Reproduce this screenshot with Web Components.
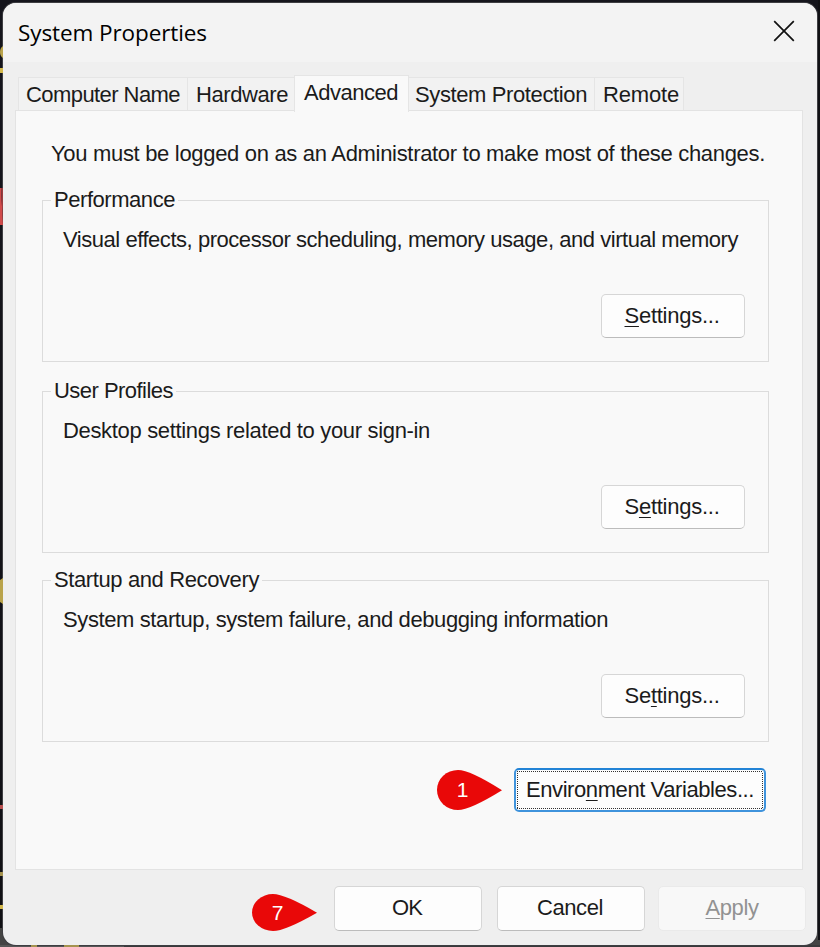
<!DOCTYPE html>
<html lang="en">
<head>
<meta charset="utf-8">
<title>System Properties</title>
<style>
html,body{margin:0;height:947px;overflow:hidden;background:#141418}
body{font:22px "Liberation Sans",Arial,sans-serif;color:#1b1b1b;position:relative}
</style>
</head>
<body>
<desk-edge></desk-edge>
<system-window></system-window>
<edge-marks></edge-marks>
<script>
const define = (name, html, setup) => customElements.define(name, class extends HTMLElement {
  connectedCallback() {
    if (this.shadowRoot) return;
    const t = document.createElement('template');
    t.innerHTML = typeof html === 'function' ? html(this) : html;
    this.attachShadow({mode: 'open'}).append(t.content.cloneNode(true));
    if (setup) setup(this);
  }
});

/* Slivers of the desktop visible around the dialog */
define('desk-edge', `<style>
:host{position:absolute;inset:0;display:block;background:linear-gradient(#15151c,#101014)}
svg{display:block}</style>
<svg width="820" height="947">
<rect x="0" y="928" width="820" height="19" fill="#444"/><rect x="818" y="0" width="2" height="940" fill="#101014"/>
<rect x="0" y="945" width="124" height="2" fill="#565656"/><rect x="124" y="945" width="696" height="2" fill="#39393b"/>
</svg>`);

define('edge-marks', `<style>:host{position:absolute;left:0;top:0;display:block}svg{display:block}</style>
<svg width="124" height="947">
<path d="M3 46Q0 48 0 52Q0 56 3 58Z" fill="#b9a34b"/><rect y="68" width="3" height="5" fill="#d3b84c"/>
<path d="M0 188H1L3 225H0Z" fill="#d04a4a"/><path d="M1 188H3V225Z" fill="#9b3d40"/>
<path d="M0 580L3 578V604L0 602Z" fill="#b9a34b"/>
<rect y="805" width="3" height="4" fill="#b85050"/><rect y="872" width="3" height="4" fill="#a5934f"/><rect y="905" width="3" height="4" fill="#d3b84c"/>
<rect x="31" y="945" width="6" height="2" fill="#a5934f"/><rect x="64" y="945" width="15" height="2" fill="#a5934f"/>
</svg>`);

/* Single line of text tracked to a set width */
define('fit-text', `<style>:host{display:block;white-space:nowrap;line-height:26px}span{display:inline-block}
::slotted(u){text-decoration-thickness:1px;text-underline-offset:3px}</style><span><slot></slot></span>`, el => {
  const s = el.shadowRoot.querySelector('span');
  el.style.width = el.getAttribute('w') + 'px';
  const w = +el.getAttribute('w');
  s.style.letterSpacing = (w - s.getBoundingClientRect().width) / Math.max(1, el.textContent.length) + 'px';
});

define('close-icon', `<style>:host{display:block;width:22px;height:22px}svg{display:block}</style>
<svg width="22" height="22" viewBox="0 0 22 22"><path d="M1.2 1.2L20.8 20.8M20.8 1.2L1.2 20.8" stroke="#111" stroke-width="1.7" fill="none"/></svg>`);

define('push-button', `<style>
:host{display:flex;box-sizing:border-box;width:144px;height:44px;padding-top:8px;justify-content:center;border:1.5px solid #d6d6d6;border-bottom-color:#bcbcbc;border-radius:5px;background:#fdfdfd}
:host([wide]){width:148px;height:45px}
:host([disabled]){background:#f8f8f8;border-color:#eaeaea;color:#929292}
:host([focused]){width:252px;height:44px;border:2px solid #3f93dc;border-top-color:#2283d6;padding:0;background:#fdfdfd}
div{display:contents}
:host([focused]) div{display:flex;box-sizing:border-box;width:248px;height:40px;padding-top:7px;justify-content:center;
background:repeating-linear-gradient(90deg,#333 0 1px,#fdfdfd 1px 2px) 1px 1px/246px 1px no-repeat,repeating-linear-gradient(90deg,#333 0 1px,#fdfdfd 1px 2px) 1px 38px/246px 1px no-repeat,repeating-linear-gradient(#333 0 1px,#fdfdfd 1px 2px) 1px 1px/1px 38px no-repeat,repeating-linear-gradient(#333 0 1px,#fdfdfd 1px 2px) 246px 1px/1px 38px no-repeat}
</style><div><slot></slot></div>`);

define('step-marker', el => `<style>
:host{display:grid;width:66px;color:#fff;font-size:21px}
svg{grid-area:1/1;display:block}span{grid-area:1/1;align-self:center;width:51px;text-align:center;line-height:24px}
</style><svg width="66" height="${el.getAttribute('h')}" viewBox="0 0 66 40" preserveAspectRatio="none"><path d="M65 20.2Q33 40 21 40A21 20 0 0 1 21 0Q33 0 65 20.2Z" fill="#e90808"/></svg><span><slot></slot></span>`);

define('tab-label', `<style>
:host{display:block;box-sizing:border-box;height:33px;padding:4px 0 0 7px;border:1px solid #e5e5e5;border-left-width:0;border-bottom:0;background:#f2f2f2}
:host([first]){border-left-width:1px}
:host([active]){height:37px;margin-bottom:-2px;background:#f9f9f9;border-left-width:1px;margin-left:-1px;padding-left:9px}
</style><slot></slot>`);

define('group-box', `<style>
:host{display:block;box-sizing:border-box;width:727px;height:162px;border:1px solid #dcdcdc;margin-left:26px}
header{width:max-content;margin:-14px 0 0 8px;padding:0 3px;background:#f9f9f9}
section{padding:14px 0 0 20px}
footer{display:flex;justify-content:flex-end;margin-top:41px;padding-right:23px}
</style><header><slot name="title"></slot></header><section><slot></slot></section><footer><slot name="action"></slot></footer>`);

define('system-window', `<style>
:host{display:flex;flex-direction:column;position:relative;width:814px;height:942px;margin:3px;overflow:hidden;border-radius:13px;background:#efefef;box-shadow:0 0 0 1px #3e3e42;outline:0}
.bar{display:flex;justify-content:space-between;height:59px;background:#f3f3f3;padding:0 22px 0 15px;box-sizing:border-box}
.bar fit-text{font-family:"Open Sans","Noto Sans",sans-serif;color:#000;font-size:22.5px;padding-top:17px}
close-icon{margin-top:17px}
nav{display:flex;align-items:flex-end;height:48px;padding-left:15px;position:relative;z-index:1}
main{display:block;box-sizing:border-box;width:788px;height:760px;margin-left:12px;border:1px solid #e3e3e3;background:#f9f9f9}
.note{padding:30px 0 0 35px;height:89px;box-sizing:border-box}
.env{display:flex;justify-content:flex-end;align-items:center;gap:11px;padding-right:36px;margin-top:26px}
.actions{display:flex;align-items:center;justify-content:flex-end;padding:16px 11px 0 0}
</style>
<div class="bar"><fit-text w="189">System Properties</fit-text><close-icon></close-icon></div>
<nav>
<tab-label first style="width:170px"><fit-text w="154">Computer Name</fit-text></tab-label>
<tab-label style="width:107px;padding-left:8px"><fit-text w="92">Hardware</fit-text></tab-label>
<tab-label active style="width:115px"><fit-text w="94">Advanced</fit-text></tab-label>
<tab-label style="width:186px;padding-left:6px"><fit-text w="172">System Protection</fit-text></tab-label>
<tab-label style="width:89px;padding-left:8px"><fit-text w="76">Remote</fit-text></tab-label>
</nav>
<main>
<div class="note"><fit-text w="714">You must be logged on as an Administrator to make most of these changes.</fit-text></div>
<group-box><fit-text slot="title" w="121">Performance</fit-text><fit-text w="675">Visual effects, processor scheduling, memory usage, and virtual memory</fit-text><push-button slot="action"><fit-text w="95" style="margin-right:2px"><u>S</u>ettings...</fit-text></push-button></group-box>
<group-box style="margin-top:29px"><fit-text slot="title" w="119">User Profiles</fit-text><fit-text w="367">Desktop settings related to your sign-in</fit-text><push-button slot="action"><fit-text w="95" style="margin-right:2px">S<u>e</u>ttings...</fit-text></push-button></group-box>
<group-box style="margin-top:27px"><fit-text slot="title" w="205">Startup and Recovery</fit-text><fit-text w="545">System startup, system failure, and debugging information</fit-text><push-button slot="action"><fit-text w="95" style="margin-right:2px">Se<u>t</u>tings...</fit-text></push-button></group-box>
<div class="env"><step-marker h="40">1</step-marker><push-button focused><fit-text w="228">Enviro<u>n</u>ment Variables...</fit-text></push-button></div>
</main>
<div class="actions"><step-marker h="37" style="margin:8px 16px 0 0">7</step-marker><push-button wide><fit-text w="30" style="margin-right:2px">OK</fit-text></push-button><push-button wide style="margin-left:15px"><fit-text w="66" style="margin-right:2px">Cancel</fit-text></push-button><push-button wide disabled style="margin-left:13px"><fit-text w="53"><u>A</u>pply</fit-text></push-button></div>
`);
</script>
</body>
</html>
